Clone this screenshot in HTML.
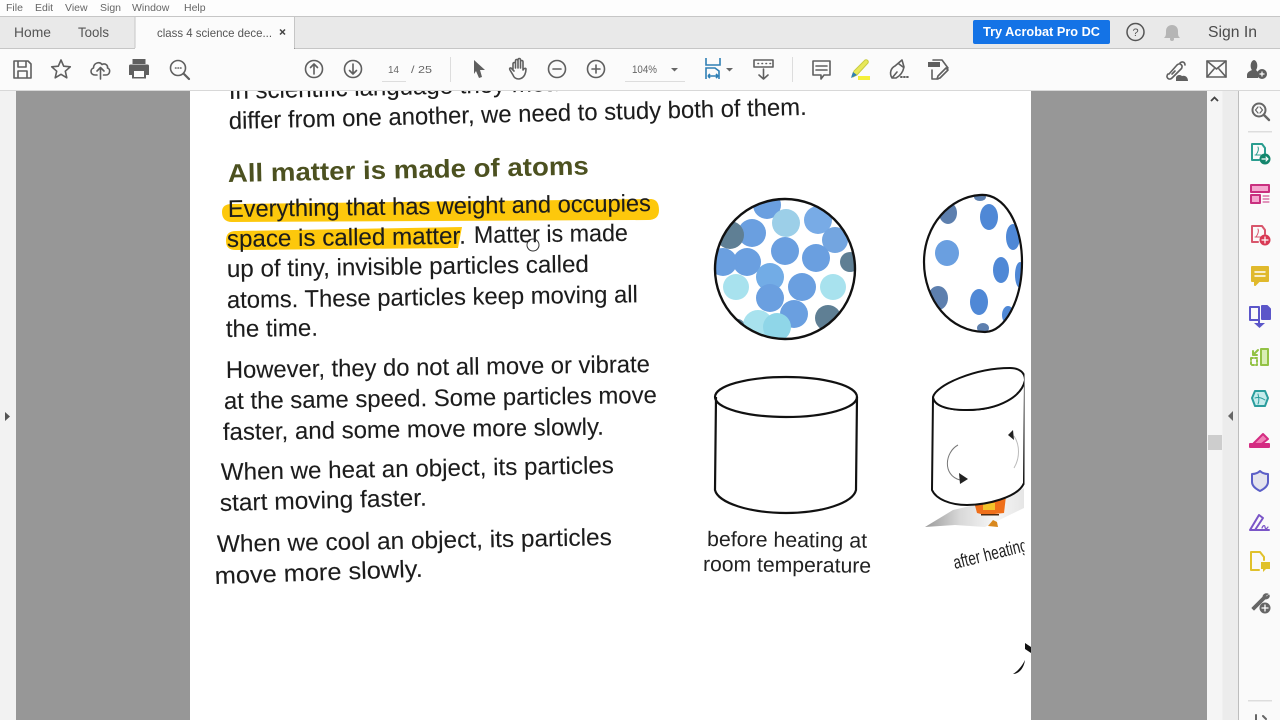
<!DOCTYPE html>
<html lang="en"><head><meta charset="utf-8"><title>Acrobat Reader</title>
<style>
html,body{margin:0;padding:0;width:1280px;height:720px;overflow:hidden;background:#fff}
svg{display:block;filter:blur(.3px)}
text{font-family:"Liberation Sans",sans-serif}
.b{font-size:24px;fill:#1c1c1c;stroke:#1c1c1c;stroke-width:.1px}
.ui{fill:none;stroke:#5f5f5f;stroke-width:1.6;stroke-linejoin:round;stroke-linecap:round}
.m{font-size:10.5px;fill:#666}
</style></head><body>
<svg width="1280" height="720" viewBox="0 0 1280 720" xmlns="http://www.w3.org/2000/svg">
<defs><clipPath id="pg"><rect x="190" y="91" width="841" height="629"/></clipPath>
<clipPath id="c1"><circle cx="785" cy="269" r="70"/></clipPath>
<clipPath id="c2"><path d="M980 195C1005 193 1022 225 1022 262C1022 300 1005 332 985 332C950 332 924 300 924 262C924 225 950 197 980 195Z"/></clipPath>
<clipPath id="rc"><rect x="900" y="350" width="124.500" height="240"/></clipPath>
<linearGradient id="sm" x1="0" x2="1" y1="0" y2="0"><stop offset="0" stop-color="#9a9a9a"/><stop offset=".35" stop-color="#d8d8d8"/><stop offset=".7" stop-color="#f6f6f6"/><stop offset="1" stop-color="#e6e6e6"/></linearGradient></defs>

<rect width="1280" height="720" fill="#979797"/>
<rect x="0" y="91" width="16" height="629" fill="#f2f2f2"/>
<path d="M5 412l5 4.500-5 4.500z" fill="#555"/>
<rect x="190" y="91" width="841" height="629" fill="#fff"/>

<g clip-path="url(#pg)">
<path d="M222 212C222 206 226 204 232 204L650 199C657 199 659 204 659 210C659 217 655 220 648 220L232 222C225 222 222 218 222 212Z" fill="#fdc80c"/>
<path d="M226 241C226 234 229 231 236 231L462 227L458 248L236 250C229 250 226 247 226 241Z" fill="#fdc80c"/>
<text class="b" transform="translate(229 99) rotate(-1.400)" textLength="383" lengthAdjust="spacingAndGlyphs">In scientific language they mean the</text>
<text class="b" transform="translate(229 129) rotate(-1.400)" textLength="578" lengthAdjust="spacingAndGlyphs">differ from one another, we need to study both of them.</text>
<text transform="translate(228 182) rotate(-1.200)" font-size="25.500" font-weight="700" fill="#4c5120" textLength="361" lengthAdjust="spacingAndGlyphs">All matter is made of atoms</text>
<text class="b" transform="translate(228 217) rotate(-.800)" textLength="423" lengthAdjust="spacingAndGlyphs">Everything that has weight and occupies</text>
<text class="b" transform="translate(227 247) rotate(-.800)" textLength="239" lengthAdjust="spacingAndGlyphs">space is called matter.</text>
<text class="b" transform="translate(474 243) rotate(-.800)" textLength="154" lengthAdjust="spacingAndGlyphs">Matter is made</text>
<text class="b" transform="translate(227 277) rotate(-.800)" textLength="362" lengthAdjust="spacingAndGlyphs">up of tiny, invisible particles called</text>
<text class="b" transform="translate(227 308) rotate(-.800)" textLength="411" lengthAdjust="spacingAndGlyphs">atoms. These particles keep moving all</text>
<text class="b" transform="translate(226 337) rotate(-.800)" textLength="92" lengthAdjust="spacingAndGlyphs">the time.</text>
<text class="b" transform="translate(226 378) rotate(-.800)" textLength="424" lengthAdjust="spacingAndGlyphs">However, they do not all move or vibrate</text>
<text class="b" transform="translate(224 409) rotate(-.800)" textLength="433" lengthAdjust="spacingAndGlyphs">at the same speed. Some particles move</text>
<text class="b" transform="translate(223 440) rotate(-.800)" textLength="381" lengthAdjust="spacingAndGlyphs">faster, and some move more slowly.</text>
<text class="b" transform="translate(221 480) rotate(-1)" textLength="393" lengthAdjust="spacingAndGlyphs">When we heat an object, its particles</text>
<text class="b" transform="translate(220 511) rotate(-1.500)" textLength="207" lengthAdjust="spacingAndGlyphs">start moving faster.</text>
<text class="b" transform="translate(217 552) rotate(-1)" textLength="395" lengthAdjust="spacingAndGlyphs">When we cool an object, its particles</text>
<text class="b" transform="translate(215 584) rotate(-2)" textLength="208" lengthAdjust="spacingAndGlyphs">move more slowly.</text>
<circle cx="533" cy="245" r="6" fill="none" stroke="#333" stroke-width="1"/>

<g clip-path="url(#c1)">
<g fill="#6a9fe0">
<circle cx="767" cy="205" r="14"/><circle cx="752" cy="233" r="14"/><circle cx="818" cy="220" r="14" fill="#78abe6"/><circle cx="835" cy="240" r="13" fill="#73a5e0"/>
<circle cx="785" cy="251" r="14"/><circle cx="816" cy="258" r="14"/><circle cx="747" cy="262" r="14"/><circle cx="723" cy="262" r="14"/>
<circle cx="770" cy="277" r="14" fill="#72ace6"/><circle cx="802" cy="287" r="14"/><circle cx="770" cy="298" r="14"/><circle cx="794" cy="314" r="14"/>
</g>
<circle cx="786" cy="223" r="14" fill="#9ccfe8"/>
<g fill="#a8e2ee"><circle cx="736" cy="287" r="13"/><circle cx="833" cy="287" r="13"/><circle cx="758" cy="325" r="15"/><circle cx="777" cy="327" r="14" fill="#8fd6e8"/></g>
<g fill="#5f7f94"><circle cx="828" cy="318" r="13"/><circle cx="730" cy="235" r="14"/><circle cx="850" cy="262" r="10"/><circle cx="738" cy="325" r="6"/></g>
</g>
<circle cx="785" cy="269" r="70" fill="none" stroke="#111" stroke-width="2.400"/>

<g clip-path="url(#c2)">
<g fill="#4f88d6">
<ellipse cx="989" cy="217" rx="9" ry="13"/><ellipse cx="1013" cy="237" rx="7" ry="13"/><ellipse cx="947" cy="253" rx="12" ry="13" fill="#6a9fe0"/>
<ellipse cx="1001" cy="270" rx="8" ry="13"/><ellipse cx="1020" cy="275" rx="5" ry="13"/><ellipse cx="979" cy="302" rx="9" ry="13"/>
<ellipse cx="1008" cy="315" rx="6" ry="9"/></g>
<g fill="#5d7fae"><ellipse cx="938" cy="298" rx="10" ry="12"/><ellipse cx="948" cy="213" rx="9" ry="11"/><ellipse cx="980" cy="197" rx="6" ry="4"/><ellipse cx="983" cy="328" rx="6" ry="5"/></g>
</g>
<path d="M980 195C1005 193 1022 225 1022 262C1022 300 1005 332 985 332C950 332 924 300 924 262C924 225 950 197 980 195Z" fill="none" stroke="#111" stroke-width="2.200"/>

<g fill="none" stroke="#111" stroke-width="2.200">
<ellipse cx="786" cy="397" rx="71" ry="20"/>
<path d="M716 397L715 490C718 503 750 513 786 513C822 513 853 503 856 490L857 397"/>
</g>
<g clip-path="url(#rc)">
<path d="M925 527L953 510L1005 498L1024 488L1024 508L985 527L955 525Z" fill="url(#sm)"/>
<path d="M973 498L977 513L985 515L1004 513L1006 496Z" fill="#ef6f1a"/><path d="M983 503h12v7h-12z" fill="#f3c32a"/><path d="M981 514h18v1.500h-18z" fill="#4a2a10"/><path d="M988 526l5-6 4 2 1 5z" fill="#d9881e"/>
<path d="M933 397L932 490C936 499 950 505 967 505C985 505 1018 498 1024 483L1025 380C1020 396 1000 410 967 410C945 410 934 405 933 397Z" fill="#fff" stroke="#111" stroke-width="2"/>
<path d="M933 397C936 385 975 368 1010 368C1020 368 1025 373 1025 380C1022 396 1000 410 967 410C945 410 934 405 933 397Z" fill="#fff" stroke="#111" stroke-width="2"/>
<path d="M958 445C945 452 942 475 960 480" fill="none" stroke="#777" stroke-width="1"/><path d="M959 473l9 6-8 5z" fill="#222"/>
<path d="M1014 436C1020 445 1020 458 1014 468" fill="none" stroke="#bbb" stroke-width="1"/><path d="M1008 435l5-5 1 10z" fill="#222"/>
<text transform="translate(955 569) rotate(-14)" font-size="18.500" fill="#222" textLength="76" lengthAdjust="spacingAndGlyphs">after heating</text>
</g>
<text transform="translate(707 546) rotate(.6)" font-size="21" fill="#222" textLength="160" lengthAdjust="spacingAndGlyphs">before heating at</text>
<text transform="translate(703 571) rotate(.6)" font-size="21" fill="#222" textLength="168" lengthAdjust="spacingAndGlyphs">room temperature</text>
<path d="M1025 643l6 4v6l-6-4zM1025 660C1024 668 1019 674 1013 674C1018 671 1022 666 1025 660Z" fill="#111"/>
</g>

<!-- Right side -->
<rect x="1207" y="91" width="15.500" height="629" fill="#f5f5f5"/>
<rect x="1222.500" y="91" width="15.500" height="629" fill="#ececec"/>
<rect x="1238" y="91" width="1" height="629" fill="#bdbdbd"/>
<rect x="1239" y="91" width="41" height="629" fill="#fafafa"/>
<path d="M1211 101l3.500-3.500 3.500 3.500" fill="none" stroke="#444" stroke-width="1.800"/>
<rect x="1208" y="435" width="14" height="15" fill="#cdcdcd"/>
<path d="M1233 411v10l-5-5z" fill="#666"/>
<rect x="1248" y="131" width="24" height="1.500" fill="#ddd"/><rect x="1248" y="700" width="24" height="1.500" fill="#ddd"/>

<g fill="none" stroke-width="2" stroke-linejoin="round" stroke-linecap="round">
<g stroke="#666"><circle cx="1259" cy="110" r="6.500"/><path d="M1264 115l5 5" stroke-width="2.400"/><path d="M1258 107l-2.500 3 2.500 3M1260 107l2.500 3-2.500 3" stroke-width="1.200"/></g>
<g stroke="#2a9d8f"><path d="M1252 144h10l3 4v6M1252 144v16h7"/><path d="M1256 155c2-3 3-6 2-8M1255 155h6" stroke-width="1"/></g><circle cx="1265" cy="159" r="5.500" fill="#14866d" stroke="none"/><path d="M1262 159h6M1266 157l2 2-2 2" stroke="#fff" stroke-width="1.200"/>
<g stroke="#c9307f"><rect x="1251" y="185" width="18" height="7" fill="#f5a7cf"/><rect x="1251" y="195" width="9" height="8" fill="#f5a7cf"/><path d="M1263 196h6M1263 199h6M1263 202h6" stroke-width="1"/></g>
<g stroke="#d8566c"><path d="M1252 226h10l3 4v4M1252 226v16h6"/><path d="M1256 237c2-3 3-6 2-8M1255 237h6" stroke-width="1"/></g><circle cx="1265" cy="240" r="5.500" fill="#d93a55" stroke="none"/><path d="M1262 240h6M1265 237v6" stroke="#fff" stroke-width="1.200"/>
<path d="M1252 267h16v14h-9l-4 4v-4h-3z" fill="#e0b92c" stroke="#e0b92c"/><path d="M1255 272h10M1255 276h10" stroke="#fff" stroke-width="1.400"/>
<g stroke="#5b56c9"><path d="M1250 307h9v13h-9z"/><path d="M1262 306h5l3 3v10h-8z" fill="#5b56c9"/><path d="M1259 318v6" stroke-width="2"/></g><path d="M1254 323h11l-5.500 5z" fill="#5b56c9"/>
<g stroke="#93c245"><rect x="1261" y="349" width="7" height="16" fill="#d9eeb5"/><path d="M1251 358h6v7h-6z" stroke-dasharray="2 2"/><path d="M1258 350l-5 5M1253 351v4h4"/></g>
<g stroke="#2a9d9d"><path d="M1255 391h10l3 7-3 8h-10l-3-8z" fill="#c6ecec"/><path d="M1255 398c3-1 7 0 10 2M1258 394c1 4 1 8 0 10" stroke-width="1"/></g>
<path d="M1251 446l12-12 5 5-9 7z" fill="#f080b5" stroke="#d42c82"/><rect x="1250" y="444" width="19" height="3" fill="#d42c82" stroke="#d42c82"/>
<path d="M1252 474c3 0 6-1 8-3c2 2 5 3 8 3v8c0 4-4 7-8 9c-4-2-8-5-8-9z" stroke="#5b5fc7" fill="#e4e4ee"/>
<g stroke="#7a55c7"><path d="M1250 530l9-15 4 3-8 12zM1250 530h19"/><path d="M1262 528c1-3 3-3 3-1s2 2 3 0" stroke-width="1.200"/></g>
<g stroke="#e0c12c"><path d="M1251 552h9l4 5v3M1251 552v18h8"/></g><path d="M1261 562h9v7h-4l-3 3v-3h-2z" fill="#e0c12c"/>
<path d="M1268 594c-3-1-5 1-5 3l-11 11 2 2 11-11c3 0 5-2 4-4l-3 2-1-1z" fill="#666" stroke="#666" stroke-width="1"/><circle cx="1265" cy="608" r="5.500" fill="#666" stroke="none"/><path d="M1262 608h6M1265 605v6" stroke="#fff" stroke-width="1.300"/>
<path d="M1256 715v5M1263 716l3 3" stroke="#666"/>
</g>

<!-- Top chrome -->
<rect x="0" y="0" width="1280" height="16" fill="#fdfdfd"/>
<text x="6" y="11" class="m">File</text><text x="35" y="11" class="m">Edit</text><text x="65" y="11" class="m">View</text><text x="100" y="11" class="m">Sign</text><text x="132" y="11" class="m">Window</text><text x="184" y="11" class="m">Help</text>
<rect x="0" y="16" width="1280" height="32" fill="#e9e9e9"/><rect x="0" y="16" width="1280" height="1" fill="#c6c6c6"/>
<rect x="135" y="17" width="159" height="32" fill="#fbfbfb"/><rect x="134.500" y="16" width="1" height="32" fill="#c6c6c6"/><rect x="294" y="16" width="1" height="32" fill="#c6c6c6"/>
<rect x="0" y="48" width="135" height="1" fill="#c6c6c6"/><rect x="295" y="48" width="985" height="1" fill="#c6c6c6"/>
<text x="14" y="37" font-size="14" fill="#555" textLength="37" lengthAdjust="spacingAndGlyphs">Home</text><text x="78" y="37" font-size="14" fill="#555" textLength="31" lengthAdjust="spacingAndGlyphs">Tools</text>
<text x="157" y="37" font-size="12" fill="#555" textLength="115" lengthAdjust="spacingAndGlyphs">class 4 science dece...</text>
<path d="M280 29.500l5 5M285 29.500l-5 5" stroke="#444" stroke-width="1.500"/>
<rect x="973" y="20" width="137" height="24" rx="2" fill="#1473e6"/>
<text x="983" y="36" font-size="13" font-weight="700" fill="#fff" textLength="117" lengthAdjust="spacingAndGlyphs">Try Acrobat Pro DC</text>
<circle cx="1135.500" cy="32" r="8.500" fill="none" stroke="#555" stroke-width="1.500"/><text x="1132.500" y="36" font-size="11" fill="#555">?</text>
<path d="M1164 38c2-2 2-3 2-7c0-4 3-6 6-6s6 2 6 6c0 4 0 5 2 7z" fill="#b5b5b5"/><circle cx="1172" cy="39" r="2" fill="#b5b5b5"/>
<text x="1208" y="37" font-size="15.500" fill="#4b4b4b" textLength="49" lengthAdjust="spacingAndGlyphs">Sign In</text>

<rect x="0" y="49" width="1280" height="41" fill="#fbfbfb"/><rect x="0" y="90" width="1280" height="1" fill="#d8d8d8"/>
<g class="ui">
<path d="M14 61h14l3 3v14h-17zM18 61v6h8v-6M18 78v-7h9v7"/>
<path d="M61 60l2.700 6.200 6.600.6-5 4.400 1.500 6.600-5.800-3.500-5.800 3.500 1.500-6.600-5-4.400 6.600-.6z"/>
<path d="M97 75h-2c-5 0-5-6-1.500-7c0-5 6-7 8.500-3.500c3-1.500 6 .5 5.500 3.500c3.500 1 2.500 7-1.500 7h-2.500M100.500 79v-11M97 71l3.500-3.500 3.500 3.500"/>
</g>
<path d="M132.500 59h13v5h-13zM130.500 64.500h17c1 0 1.500 .5 1.500 1.500v9h-3v3.500h-14v-3.500h-3v-9c0-1 .5-1.500 1.500-1.500z" fill="#5f5f5f"/><rect x="134" y="71" width="10" height="6" fill="#fbfbfb"/>
<g class="ui">
<circle cx="178" cy="68" r="7.500"/><path d="M184 74l5 5" stroke-width="2.200"/><path d="M175.500 68h.5M178 68h.5M180.500 68h.5"/>
<circle cx="314" cy="69" r="8.500"/><path d="M314 74v-10M310.500 67.500l3.500-3.500 3.500 3.500"/>
<circle cx="353" cy="69" r="8.500"/><path d="M353 64v10M349.500 70.500l3.500 3.500 3.500-3.500"/>
<circle cx="557" cy="69" r="8.500"/><path d="M553 69h8"/>
<circle cx="596" cy="69" r="8.500"/><path d="M592 69h8M596 65v8"/>
<path d="M513 69v-5c0-2 2.500-2 2.500 0v4M515.500 68v-7c0-2 2.500-2 2.500 0v7M518 68v-8c0-2 2.500-2 2.500 0v8M520.500 68v-6c0-2 2.500-2 2.500 0v8c1-2 3-2 3-1c0 3-1 9-7 10c-3 0-5-1-6-4l-3-5c-1-2 1-3 2-1l2 2"/>
</g>
<path d="M474 60l11 10h-5l2 7-3 1-3-7-2 3z" fill="#5f5f5f"/>
<text x="388" y="73" font-size="10.500" fill="#666" textLength="11" lengthAdjust="spacingAndGlyphs">14</text><text x="411" y="73" font-size="10.500" fill="#666" textLength="21" lengthAdjust="spacingAndGlyphs">/ 25</text>
<rect x="382" y="81" width="24" height="1" fill="#ddd"/>
<rect x="450" y="57" width="1" height="25" fill="#ddd"/><rect x="792" y="57" width="1" height="25" fill="#ddd"/>
<text x="632" y="73" font-size="11" fill="#666" textLength="25" lengthAdjust="spacingAndGlyphs">104%</text><rect x="625" y="81" width="60" height="1" fill="#ddd"/>
<path d="M671 68h7l-3.500 3.500z" fill="#666"/><path d="M726 68h7l-3.500 3.500z" fill="#666"/>
<g fill="none" stroke="#2f7fb5" stroke-width="1.600"><path d="M706 58v7h14v-7M706 79V68h9l4 3v8M708 76h10M708 76l2-2M708 76l2 2M718 76l-2-2M718 76l-2 2"/></g>
<g class="ui"><rect x="754" y="60" width="19" height="7"/><path d="M763.500 69v10M759 75l4.500 4 4.500-4"/><path d="M758 63.500h.5M762 63.500h.5M766 63.500h.5M770 63.500h.5"/>
<path d="M813 61h17v14h-6l-3 4v-4h-8zM816 66h11M816 70h11"/></g>
<path d="M852 76l2-5 11-11c2-1 4 1 3 3l-11 12-4 2z" fill="#e8e85a" stroke="#c8cc40" stroke-width="1"/><path d="M851 78l2-6 4 3z" fill="#2f7fb5"/><rect x="858" y="76" width="12" height="4" fill="#f5f03a"/>
<g class="ui"><path d="M892 78c-3-5-1-10 3-12l7-6 2 7c-1 5-4 9-8 11zM892 78l5-6M899 64l4 3"/><path d="M901 77h.8M904 77h.8M907 77h.8" stroke-width="2"/></g>
<g class="ui"><path d="M933 60h9l6 8M932 70v9h6M948 70l-8 8-3 1 1-3 8-8z"/></g><rect x="928" y="62" width="12" height="5" fill="#5f5f5f"/>
<g class="ui"><path d="M1169 74l8-9c3-3 7 1 4 4l-9 9c-3 3-7-1-4-4zM1175 71l-3 3"/><path d="M1180 63c2-2 5-1 5 2"/></g>
<path d="M1176 78c0-3 4-4 6-2c3-1 6 1 6 5h-12z" fill="#5f5f5f"/>
<g class="ui" stroke-width="1.300"><rect x="1207" y="61" width="19" height="16"/><path d="M1207 61l9.500 8 9.500-8M1207 77l7-8M1226 77l-7-8"/></g>
<path d="M1247 78v-3c0-3 3-4 5-5c-2-2-2-9 2-10c4 1 4 8 2 10l2 2v6z" fill="#5f5f5f"/><circle cx="1262" cy="74" r="5" fill="#5f5f5f"/><path d="M1259.500 74h5M1262 71.500v5" stroke="#fff" stroke-width="1.200"/>
</svg>
</body></html>
